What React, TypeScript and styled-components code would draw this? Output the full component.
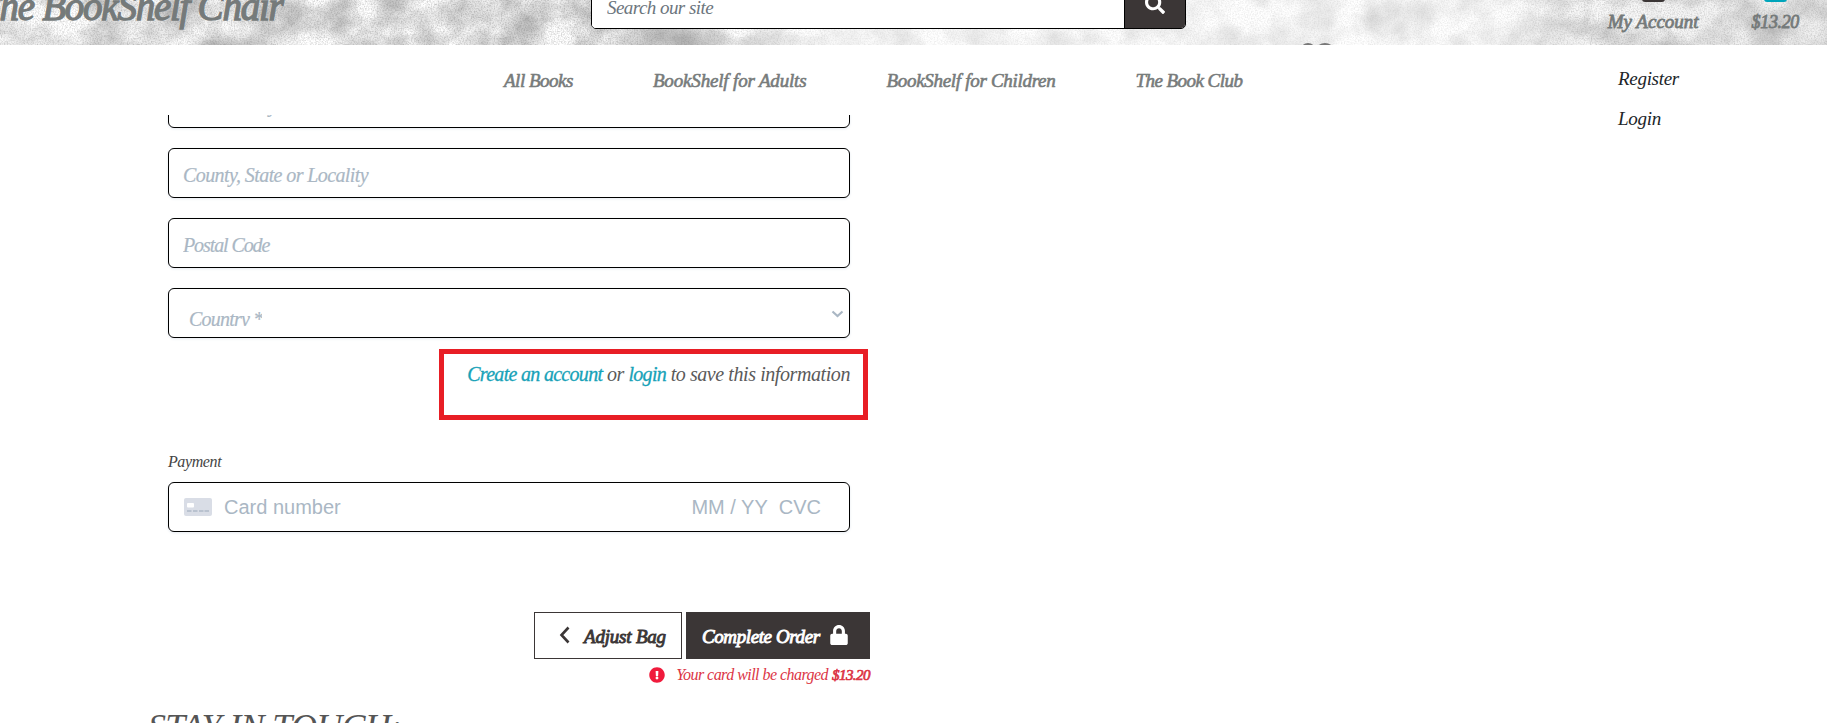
import React from "react";
import styled, { createGlobalStyle } from "styled-components";
import { FaSearch, FaLock, FaExclamationCircle } from "react-icons/fa";

const GlobalStyle = createGlobalStyle`
  * { box-sizing: border-box; }
  html, body { margin: 0; padding: 0; background: #fff; overflow: hidden; }
  body, input, button {
    font-family: "Liberation Serif", "Times New Roman", serif;
    font-style: italic;
  }
`;

const Page = styled.div`
  position: relative;
  width: 100%;
  height: 723px;
  overflow: hidden;
  background: #fff;
`;

const Header = styled.header`
  position: relative;
  display: flex;
  align-items: flex-end;
  height: 45px;
  overflow: hidden;
  background: #e8e8e8;
`;

const Texture = styled.svg`
  position: absolute;
  inset: 0;
`;

const Logo = styled.a`
  position: relative;
  width: 591px;
  height: 45px;
  line-height: 14px;
  white-space: nowrap;
  font-size: 39px;
  letter-spacing: -1.25px;
  color: #757a7a;
  -webkit-text-stroke: 1.3px #757a7a;
  text-indent: -21px;
`;

const SearchBox = styled.div`
  position: relative;
  display: flex;
  width: 595px;
  height: 50px;
  margin-bottom: 16px;
  border: 1px solid #000;
  border-radius: 5px;
  overflow: hidden;
  background: #fff;
`;

const SearchInput = styled.input`
  flex: 1;
  min-width: 0;
  border: 0;
  outline: 0;
  padding: 7px 15px 0;
  font-size: 19px;
  letter-spacing: -0.55px;
  background: #fff;
  &::placeholder { color: #6c757d; opacity: 1; }
`;

const SearchButton = styled.button`
  display: flex;
  justify-content: center;
  align-items: center;
  width: 61px;
  border: 0;
  border-left: 1px solid #000;
  padding: 0;
  color: #fff;
  background: #3b3636;
`;

const Tools = styled.div`
  position: relative;
  display: flex;
  gap: 53px;
  margin-left: auto;
  padding: 0 28px 12px 0;
`;

const Tool = styled.a<{ $tight?: boolean }>`
  display: flex;
  flex-direction: column;
  align-items: center;
  gap: 9px;
  line-height: 22px;
  font-size: ${(p) => (p.$tight ? 18 : 19)}px;
  letter-spacing: ${(p) => (p.$tight ? -0.35 : 0)}px;
  color: #757a7a;
  -webkit-text-stroke: 0.8px #757a7a;
`;

const ToolIcon = styled.span<{ $color: string }>`
  width: 23px;
  height: 20px;
  border-radius: 3px;
  background: ${(p) => p.$color};
`;

const Nav = styled.nav`
  display: flex;
  gap: 80px;
  height: 70px;
  padding: 24px 0 0 504px;
`;

const NavLink = styled.a<{ $spacing: number }>`
  line-height: 24px;
  font-size: 19px;
  white-space: nowrap;
  letter-spacing: ${(p) => p.$spacing}px;
  color: #777b7b;
  -webkit-text-stroke: 0.6px #777b7b;
`;

const AccountMenu = styled.div`
  position: absolute;
  top: 60px;
  left: 1618px;
  display: flex;
  flex-direction: column;
`;

const MenuItem = styled.a`
  height: 40px;
  line-height: 38px;
  font-size: 19px;
  letter-spacing: -0.3px;
  color: #212529;
`;

const Content = styled.main`
  height: 608px;
  overflow: hidden;
`;

const Form = styled.form`
  width: 682px;
  margin: -37px 0 0 168px;
`;

const Field = styled.div`
  display: flex;
  align-items: center;
  height: 50px;
  margin-bottom: 20px;
  border: 1px solid #000;
  border-radius: 6px;
  background: #fff;
  box-shadow: 0 1px 3px #e6ebf1;
`;

const Input = styled.input<{ $spacing: number }>`
  width: 100%;
  border: 0;
  outline: 0;
  padding: 3px 14px 0;
  font-size: 20px;
  line-height: 24px;
  letter-spacing: ${(p) => p.$spacing}px;
  background: transparent;
  &::placeholder {
    color: #aab7c4;
    opacity: 1;
    -webkit-text-stroke: 0.2px #aab7c4;
  }
`;

const Select = styled(Field)`
  justify-content: space-between;
  align-items: flex-start;
  margin-bottom: 0;
  padding: 17px 5px 0 20px;
`;

const SelectText = styled.span`
  height: 20px;
  overflow: hidden;
  line-height: 26px;
  font-size: 20px;
  letter-spacing: -0.8px;
  color: #aab7c4;
  -webkit-text-stroke: 0.2px #aab7c4;
`;

const SelectArrow = styled.svg`
  margin-top: 3px;
`;

const SaveNote = styled.div`
  display: flex;
  justify-content: flex-end;
  width: 429px;
  height: 71px;
  margin: 11px 0 0 271px;
  padding: 7px 13px 0 0;
  border: 5px solid #e81e25;
  line-height: 26px;
  white-space: pre;
  font-size: 20px;
  letter-spacing: -0.42px;
  color: #5a5a5a;
`;

const AccentLink = styled.a`
  letter-spacing: -0.7px;
  color: #17a2b8;
  -webkit-text-stroke: 0.3px #17a2b8;
`;

const Label = styled.label`
  display: block;
  margin-top: 31px;
  height: 31px;
  line-height: 21px;
  font-size: 16px;
  letter-spacing: -0.4px;
  color: #444;
`;

const CardField = styled(Field)`
  margin: 0;
  padding: 0 28px 0 15px;
  font-family: "Liberation Sans", Arial, sans-serif;
  font-style: normal;
  font-size: 20px;
  white-space: pre;
  color: #aab7c4;
`;

const CardNumber = styled.span`
  flex: 1;
  padding-left: 12px;
`;

const CardExpiry = styled.span`
  margin-right: 11px;
`;

const Actions = styled.div`
  display: flex;
  justify-content: flex-end;
  gap: 4px;
  width: 702px;
  margin-top: 80px;
`;

const ActionButton = styled.button<{ $dark?: boolean }>`
  display: flex;
  align-items: center;
  width: ${(p) => (p.$dark ? 184 : 148)}px;
  height: 47px;
  padding: 3px 15px 0 ${(p) => (p.$dark ? 15 : 24)}px;
  gap: ${(p) => (p.$dark ? 9 : 14)}px;
  border: 1px solid #3b3636;
  white-space: nowrap;
  font-size: 19px;
  letter-spacing: ${(p) => (p.$dark ? -0.4 : -0.2)}px;
  color: ${(p) => (p.$dark ? "#fff" : "#3b3636")};
  background: ${(p) => (p.$dark ? "#3b3636" : "#fff")};
  -webkit-text-stroke: 0.9px currentColor;
  svg { flex: none; position: relative; top: -2px; }
`;

const ChargeNote = styled.p`
  display: flex;
  justify-content: flex-end;
  align-items: center;
  width: 702px;
  margin: 6px 0 0;
  line-height: 20px;
  font-size: 16px;
  letter-spacing: -0.54px;
  color: #dc3545;
  svg { margin-right: 11px; color: #f01b3c; }
`;

const Amount = styled.strong`
  margin-left: 4px;
  font-size: 15px;
  font-weight: 400;
  -webkit-text-stroke: 0.7px currentColor;
`;

const FooterTitle = styled.h2`
  margin: 22px 0 0 148px;
  line-height: 40px;
  font-size: 36px;
  font-weight: 400;
  letter-spacing: -0.65px;
  white-space: nowrap;
  color: #555;
`;

function HeaderTexture() {
  return (
    <Texture width="1827" height="45" viewBox="0 0 1827 45">
      <defs>
        <filter id="clouds" x="0" y="0" width="100%" height="100%" colorInterpolationFilters="sRGB">
          <feTurbulence type="fractalNoise" baseFrequency="0.024 0.028" numOctaves="6" seed="8" />
          <feColorMatrix values="0.6 0 0 0 0.6  0.6 0 0 0 0.6  0.6 0 0 0 0.6  0 0 0 0 1" />
        </filter>
        <filter id="grain" x="0" y="0" width="100%" height="100%" colorInterpolationFilters="sRGB">
          <feTurbulence type="fractalNoise" baseFrequency="0.7" numOctaves="2" seed="3" />
          <feColorMatrix values="0 0 0 0 0.4  0 0 0 0 0.4  0 0 0 0 0.4  1.4 0 0 0 -0.55" />
        </filter>
        <linearGradient id="light">
          <stop offset="0" stopColor="#fff" stopOpacity="0.1" />
          <stop offset="0.34" stopColor="#fff" stopOpacity="0" />
          <stop offset="0.41" stopColor="#fff" stopOpacity="0.3" />
          <stop offset="0.46" stopColor="#fff" stopOpacity="0.6" />
          <stop offset="0.82" stopColor="#fff" stopOpacity="0.55" />
          <stop offset="0.87" stopColor="#ddd" stopOpacity="0.2" />
          <stop offset="1" stopColor="#d0d0d0" stopOpacity="0.35" />
        </linearGradient>
        <radialGradient id="blot">
          <stop offset="0" stopColor="#777" stopOpacity="0.45" />
          <stop offset="0.5" stopColor="#888" stopOpacity="0.3" />
          <stop offset="1" stopColor="#999" stopOpacity="0" />
        </radialGradient>
      </defs>
      <rect width="1827" height="45" filter="url(#clouds)" />
      <rect width="1827" height="45" filter="url(#grain)" opacity="0.5" />
      <rect width="1827" height="45" fill="url(#light)" />
      <ellipse cx="675" cy="38" rx="62" ry="22" fill="url(#blot)" />
      <ellipse cx="1372" cy="19" rx="13" ry="17" fill="url(#blot)" opacity="0.4" />
      <path d="M1303 46q5-4 10 0M1319 46q6-4 12 0" fill="none" stroke="#777" strokeWidth="2" />
    </Texture>
  );
}

function CardIcon() {
  return (
    <svg width="28" height="18" viewBox="0 0 28 18">
      <rect width="28" height="18" rx="2" fill="#d9dde6" />
      <rect x="3" y="5" width="7" height="4.5" rx="1" fill="#fff" />
      <path d="M3 13h4.5M9 13h4.5M15 13h4.5M20.500 13H25" stroke="#b9c2cf" strokeWidth="2" />
    </svg>
  );
}

export default function App() {
  return (
    <Page>
      <GlobalStyle />
      <Header>
        <HeaderTexture />
        <Logo>The BookShelf Chair</Logo>
        <SearchBox>
          <SearchInput placeholder="Search our site" />
          <SearchButton type="button" aria-label="Search">
            <FaSearch size={20} />
          </SearchButton>
        </SearchBox>
        <Tools>
          <Tool>
            <ToolIcon $color="#3b3636" />
            My Account
          </Tool>
          <Tool $tight>
            <ToolIcon $color="#00a5bb" />
            $13.20
          </Tool>
        </Tools>
      </Header>
      <Nav>
        <NavLink $spacing={-0.49}>All Books</NavLink>
        <NavLink $spacing={-0.17}>BookShelf for Adults</NavLink>
        <NavLink $spacing={-0.3}>BookShelf for Children</NavLink>
        <NavLink $spacing={-0.54}>The Book Club</NavLink>
      </Nav>
      <AccountMenu>
        <MenuItem>Register</MenuItem>
        <MenuItem>Login</MenuItem>
      </AccountMenu>
      <Content>
        <Form>
          <Field><Input $spacing={-0.8} placeholder="Town or City" /></Field>
          <Field><Input $spacing={-0.6} placeholder="County, State or Locality" /></Field>
          <Field><Input $spacing={-1.1} placeholder="Postal Code" /></Field>
          <Select>
            <SelectText>Country *</SelectText>
            <SelectArrow width="13" height="10" viewBox="0 0 13 10">
              <path d="M1.500 2.500l5 4.500 5-4.500" fill="none" stroke="#aab7c4" strokeWidth="2.200" />
            </SelectArrow>
          </Select>
          <SaveNote>
            <AccentLink>Create an account</AccentLink> or <AccentLink>login</AccentLink> to save this information
          </SaveNote>
          <Label>Payment</Label>
          <CardField>
            <CardIcon />
            <CardNumber>Card number</CardNumber>
            <CardExpiry>MM / YY</CardExpiry>
            <span>CVC</span>
          </CardField>
          <Actions>
            <ActionButton type="button">
              <svg width="11" height="18" viewBox="0 0 11 18">
                <path d="M9.500 1.500L2.500 9l7 7.500" fill="none" stroke="#3b3636" strokeWidth="2.600" />
              </svg>
              Adjust Bag
            </ActionButton>
            <ActionButton type="button" $dark>
              Complete Order
              <FaLock size={20} />
            </ActionButton>
          </Actions>
          <ChargeNote>
            <FaExclamationCircle size={16} />
            Your card will be charged
            <Amount>$13.20</Amount>
          </ChargeNote>
        </Form>
        <FooterTitle>STAY IN TOUCH:</FooterTitle>
      </Content>
    </Page>
  );
}
